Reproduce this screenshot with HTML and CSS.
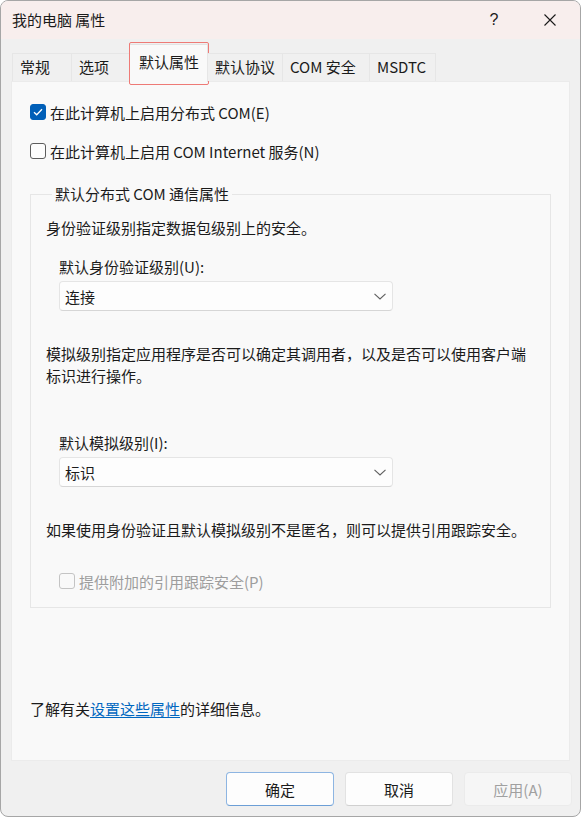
FILE: index.html
```
<!DOCTYPE html>
<html lang="zh-CN">
<head>
<meta charset="utf-8">
<title>我的电脑 属性</title>
<link rel="stylesheet" href="styles.css">
</head>
<body>
<div class="window">
  <div class="titlebar">
    <span class="title">我的电脑 属性</span>
    <span class="help">?</span>
    <span class="close">
      <svg width="12" height="12" viewBox="0 0 12 12"><path d="M0.5 0.5 L11.5 11.5 M11.5 0.5 L0.5 11.5" stroke="#1a1a1a" stroke-width="1.1" fill="none"/></svg>
    </span>
  </div>
  <div class="tabs">
    <div class="tab">常规</div>
    <div class="tab">选项</div>
    <div class="tab active">默认属性<span class="highlight"></span></div>
    <div class="tab">默认协议</div>
    <div class="tab">COM 安全</div>
    <div class="tab">MSDTC</div>
  </div>
  <div class="panel">
    <label class="check-row">
      <span class="checkbox checked">
        <svg width="10" height="8" viewBox="0 0 10 8"><path d="M1 4.2 L3.7 6.8 L9 1.2" stroke="#fff" stroke-width="1.3" fill="none"/></svg>
      </span>
      <span>在此计算机上启用分布式 COM(E)</span>
    </label>
    <label class="check-row second">
      <span class="checkbox"></span>
      <span>在此计算机上启用 COM Internet 服务(N)</span>
    </label>
    <fieldset class="group">
      <legend>默认分布式 COM 通信属性</legend>
      <p class="text first">身份验证级别指定数据包级别上的安全。</p>
      <p class="field-label">默认身份验证级别(U):</p>
      <div class="select">
        <span>连接</span>
        <svg width="12" height="7" viewBox="0 0 12 7"><path d="M0.5 0.8 L6 6 L11.5 0.8" stroke="#5f5f5f" stroke-width="1.1" fill="none"/></svg>
      </div>
      <p class="text para">模拟级别指定应用程序是否可以确定其调用者，以及是否可以使用客户端<br>标识进行操作。</p>
      <p class="field-label second-label">默认模拟级别(I):</p>
      <div class="select">
        <span>标识</span>
        <svg width="12" height="7" viewBox="0 0 12 7"><path d="M0.5 0.8 L6 6 L11.5 0.8" stroke="#5f5f5f" stroke-width="1.1" fill="none"/></svg>
      </div>
      <p class="text note">如果使用身份验证且默认模拟级别不是匿名，则可以提供引用跟踪安全。</p>
      <label class="check-row disabled">
        <span class="checkbox"></span>
        <span>提供附加的引用跟踪安全(P)</span>
      </label>
    </fieldset>
    <p class="info">了解有关<a href="#" class="link">设置这些属性</a>的详细信息。</p>
  </div>
  <div class="buttons">
    <button class="btn default">确定</button>
    <button class="btn">取消</button>
    <button class="btn disabled">应用(A)</button>
  </div>
</div>
</body>
</html>
```
FILE: styles.css
```
* { box-sizing: border-box; }
html, body { margin: 0; padding: 0; background: #ffffff; }
body {
  font-family: "Noto Sans CJK SC", "Noto Sans", sans-serif;
  font-size: 15px;
  color: #1b1b1b;
}
.window {
  width: 581px;
  height: 817px;
  border: 1px solid #a6a6a6;
  border-radius: 8px;
  background: #f0f0f0;
  display: flex;
  flex-direction: column;
  overflow: hidden;
}
.titlebar {
  height: 38px;
  flex: none;
  background: #f8eeed;
  display: flex;
  align-items: center;
  padding-left: 11px;
  line-height: 20px;
}
.title { flex: 1; font-size: 15px; }
.help { width: 20px; text-align: center; font-family: "Liberation Sans", sans-serif; font-size: 16px; margin-right: 40px; }
.close { width: 12px; height: 12px; margin-right: 24px; display: flex; }
.tabs {
  display: flex;
  align-items: flex-end;
  height: 42px;
  flex: none;
  padding-left: 11px;
  position: relative;
  z-index: 1;
}
.tab {
  height: 28px;
  line-height: 25px;
  padding: 0 7px;
  border: 1px solid #e6e6e6;
  border-bottom: none;
  background: #f0f0f0;
  margin-right: -1px;
  position: relative;
  white-space: nowrap;
}
.tab:nth-child(1) { width: 60px; }
.tab:nth-child(2) { width: 59px; }
.tab:nth-child(3) { width: 79px; }
.tab:nth-child(4) { width: 76px; }
.tab:nth-child(5) { width: 88px; }
.tab:nth-child(6) { width: 67px; }
.tab.active {
  line-height: 33px;
  background: #f9f9f9;
  border-color: #e3e3e3;
  margin-bottom: -1px;
  height: 38px;
  padding-left: 9px;
}
.highlight {
  position: absolute;
  left: -1px;
  top: -3px;
  width: 80px;
  height: 43px;
  border: 1.5px solid #ee7a76;
  border-radius: 2px;
  pointer-events: none;
}
.panel {
  height: 680px;
  flex: none;
  margin: 0 10px 0 10px;
  background: #f9f9f9;
  border: 1px solid #ebebeb;
  padding: 19px 18px 0 18px;
}
.check-row {
  display: flex;
  align-items: center;
  height: 22px;
  gap: 4px;
}
.check-row.second { margin-top: 17px; }
.checkbox {
  width: 16px;
  height: 16px;
  border: 1px solid #5d5d5d;
  border-radius: 3px;
  background: #fdfdfd;
  display: flex;
  align-items: center;
  justify-content: center;
  flex: none;
}
.checkbox.checked {
  background: #005fb8;
  border-color: #005fb8;
}
.check-row.disabled { color: #9d9d9d; margin-top: 29px; margin-left: 13px; }
.check-row.disabled .checkbox { border-color: #c4c4c4; background: #f9f9f9; }
.group {
  margin: 21px 0 0 0;
  padding: 0 0 15px 15px;
  border: 1px solid #e6e6e6;
  min-width: 0;
}
.group legend {
  padding: 0 3px;
  margin-left: 6px;
  line-height: 22px;
}
p { margin: 0; line-height: 22px; }
.text.first { margin-top: 12px; }
.field-label { margin-top: 17px; margin-left: 13px; }
.second-label { margin-top: 45px; }
.select {
  margin: 3px 0 0 13px;
  width: 334px;
  height: 30px;
  border: 1px solid #e5e5e5;
  border-bottom-color: #d6d6d6;
  border-radius: 4px;
  background: #fdfdfd;
  display: flex;
  align-items: center;
  justify-content: space-between;
  padding: 0 6px 0 5px;
}
.text.para { margin-top: 32px; }
.text.note { margin-top: 32px; }
.info { margin-top: 90px; }
.link { color: #0067c0; text-decoration: underline; text-underline-offset: 2px; }
.buttons {
  display: flex;
  justify-content: flex-end;
  gap: 11px;
  padding: 11px 8px 0 0;
}
.btn {
  width: 108px;
  height: 34px;
  font-family: inherit;
  font-size: 15px;
  color: #1b1b1b;
  background: #fdfdfd;
  border: 1px solid #e2e2e2;
  border-bottom-color: #d0d0d0;
  border-radius: 4px;
  padding: 0;
}
.btn.default { border: 1px solid #8db5e2; border-bottom-color: #6c9fd6; }
.btn.disabled { color: #a0a0a0; background: #f6f6f6; border-color: #ebebeb; }
```
